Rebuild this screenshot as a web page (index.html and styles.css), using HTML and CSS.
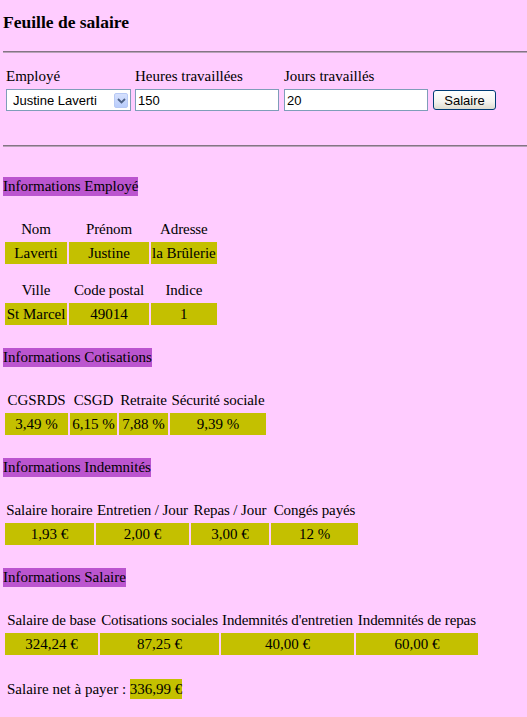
FILE: index.html
```html
<!DOCTYPE html>
<html lang="fr">
<head>
  <meta charset="UTF-8" />
  <title>Feuille de salaire</title>
  <link rel="stylesheet" href="styles.css">
</head>
<body>

  <h3 class="titre-page">Feuille de salaire</h3>
  <hr>

  <form class="choix">
    <label for="employe">Employé</label>
    <label for="heures">Heures travaillées</label>
    <label for="jours">Jours travaillés</label>
    <span></span>

    <div class="liste">
      <select id="employe">
        <option>Justine Laverti</option>
      </select>
      <span class="fleche">
        <svg width="9" height="6" viewBox="0 0 9 6"><path d="M1 1 L4.5 4.5 L8 1" fill="none" stroke="#4d6185" stroke-width="1.8"/></svg>
      </span>
    </div>
    <input type="text" id="heures" value="150">
    <input type="text" id="jours" value="20">
    <button type="button" class="bouton">Salaire</button>
  </form>

  <hr class="sep">

  <h4 class="titre premier">Informations Employé</h4>
  <table class="infos employe">
    <tr><th class="nom">Nom</th><th class="prenom">Prénom</th><th class="adresse">Adresse</th></tr>
    <tr><td>Laverti</td><td>Justine</td><td>la Brûlerie</td></tr>
    <tr class="vide"><th colspan="3"></th></tr>
    <tr><th>Ville</th><th>Code postal</th><th>Indice</th></tr>
    <tr><td>St Marcel</td><td>49014</td><td>1</td></tr>
  </table>

  <h4 class="titre">Informations Cotisations</h4>
  <table class="infos cotisations">
    <tr><th class="c1">CGSRDS</th><th class="c2">CSGD</th><th class="c3">Retraite</th><th class="c4">Sécurité sociale</th></tr>
    <tr><td>3,49 %</td><td>6,15 %</td><td>7,88 %</td><td>9,39 %</td></tr>
  </table>

  <h4 class="titre">Informations Indemnités</h4>
  <table class="infos indemnites">
    <tr><th class="c1">Salaire horaire</th><th class="c2">Entretien / Jour</th><th class="c3">Repas / Jour</th><th class="c4">Congés payés</th></tr>
    <tr><td>1,93 €</td><td>2,00 €</td><td>3,00 €</td><td>12 %</td></tr>
  </table>

  <h4 class="titre">Informations Salaire</h4>
  <table class="infos salaire">
    <tr><th class="c1">Salaire de base</th><th class="c2">Cotisations sociales</th><th class="c3">Indemnités d'entretien</th><th class="c4">Indemnités de repas</th></tr>
    <tr><td>324,24 €</td><td>87,25 €</td><td>40,00 €</td><td>60,00 €</td></tr>
  </table>

  <p class="net">Salaire net à payer : <span class="montant">336,99 €</span></p>

</body>
</html>
```

FILE: styles.css
```css
body {
  margin: 0 0 0 3px;
  background-color: #ffccff;
  color: #000;
  font-family: "Liberation Serif", "Times New Roman", serif;
  font-size: 15px;
}

.titre-page {
  margin: 12px 0 0;
  font-size: 17.5px;
  line-height: 21px;
}

hr {
  margin: 18px 0 0;
  height: 0;
  border: none;
  border-top: 1px solid #857485;
  border-bottom: 1px solid #b9a2b9;
}

hr.sep {
  margin-top: 34px;
}

/* choix de l'employé et saisie des heures */
.choix {
  display: grid;
  grid-template-columns: 125px 145px 145px auto;
  column-gap: 4px;
  row-gap: 4px;
  margin: 14px 0 0;
  padding-left: 3px;
  line-height: 18px;
}

.liste {
  position: relative;
  width: 125px;
  height: 22px;
}

.liste select {
  appearance: none;
  width: 125px;
  height: 22px;
  margin: 0;
  padding: 0 0 0 6px;
  border: 1px solid #7f9db9;
  border-radius: 0;
  background: #fff;
  font-family: "Liberation Sans", Arial, sans-serif;
  font-size: 13px;
  color: #000;
}

.fleche {
  position: absolute;
  top: 4px;
  right: 3px;
  width: 14px;
  height: 15px;
  display: flex;
  align-items: center;
  justify-content: center;
  box-sizing: border-box;
  border: 1px solid #b7c9f5;
  border-radius: 2px;
  background: linear-gradient(#d5e0fd, #b9cdfb);
}

.choix input {
  width: 144px;
  height: 22px;
  margin: 0;
  padding: 0 2px;
  box-sizing: border-box;
  border: 1px solid #7f9db9;
  background: #fff;
  font-family: "Liberation Sans", Arial, sans-serif;
  font-size: 13px;
}

.bouton {
  width: 63px;
  height: 20px;
  margin-top: 1px;
  padding: 0;
  border: 1px solid #003c74;
  border-radius: 3px;
  background: linear-gradient(#ffffff, #f4f3ee 60%, #dedbcf);
  font-family: "Liberation Sans", Arial, sans-serif;
  font-size: 13px;
  color: #000;
}

/* blocs d'informations */
.titre {
  width: fit-content;
  margin: 21px 0 0;
  padding: 0;
  background-color: #bb55cf;
  font-size: 15px;
  font-weight: normal;
  line-height: 19px;
}

.titre.premier {
  margin-top: 30px;
}

.infos {
  margin-top: 20px;
  border-spacing: 2px;
  border-collapse: separate;
}

.infos th,
.infos td {
  height: 22px;
  padding: 0 1px;
  text-align: center;
  font-weight: normal;
  white-space: nowrap;
}

.infos th {
  letter-spacing: -0.1px;
}

.infos td {
  background-color: #c4c000;
}

.infos tr.vide th {
  height: 11px;
  padding: 0;
}

/* largeurs des colonnes (contenu, sans le padding) */
.employe .nom { width: 60px; }
.employe .prenom { width: 78px; }
.employe .adresse { width: 61px; }

.cotisations .c1 { width: 61px; }
.cotisations .c2 { width: 45px; }
.cotisations .c3 { width: 47px; }
.cotisations .c4 { width: 94px; }

.indemnites .c1 { width: 87px; }
.indemnites .c2 { width: 91px; }
.indemnites .c3 { width: 76px; }
.indemnites .c4 { width: 85px; }

.salaire .c1 { width: 91px; }
.salaire .c2 { width: 117px; }
.salaire .c3 { width: 129px; }
.salaire .c4 { width: 120px; }

.net {
  margin: 22px 0 0;
  padding-left: 4px;
  line-height: 21px;
}

.montant {
  padding: 2px 0;
  background-color: #c4c000;
}
```
